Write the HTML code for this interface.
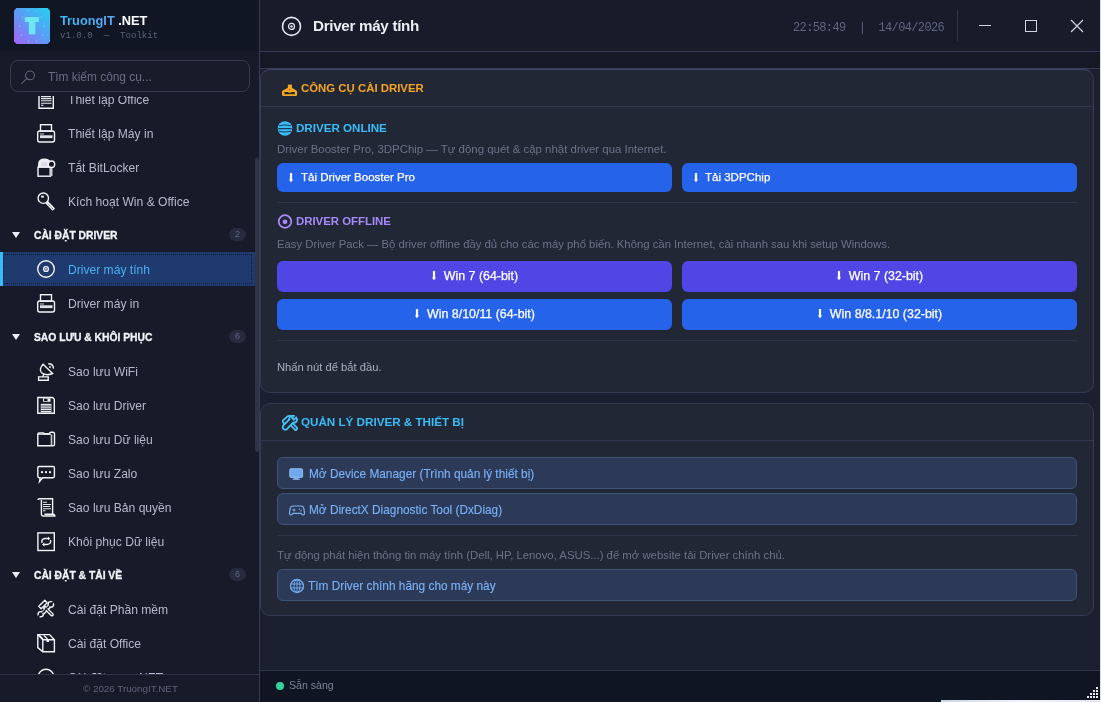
<!DOCTYPE html>
<html><head><meta charset="utf-8">
<style>
*{margin:0;padding:0;box-sizing:border-box}
html,body{width:1101px;height:702px;overflow:hidden;background:#1b2030;font-family:"Liberation Sans",sans-serif}
.abs{position:absolute}
#sb{position:absolute;left:0;top:0;width:259px;height:702px;background:#171b29}
#sbh{position:absolute;left:0;top:0;width:259px;height:51px;background:#111625}
#sbline{position:absolute;left:259px;top:0;width:1px;height:702px;background:#353b51}
#logo{position:absolute;left:14px;top:8px;width:36px;height:36px;border-radius:6px;background:linear-gradient(45deg,#a855f7 0%,#60a5fa 55%,#22d3ee 100%)}
#brand{position:absolute;left:60px;top:13px;font-weight:bold;font-size:12.8px;color:#fff;white-space:pre}
#brand .g{background:linear-gradient(90deg,#38bdf8,#60a5fa);-webkit-background-clip:text;color:transparent}
#ver{position:absolute;left:60px;top:30px;font-family:"Liberation Mono",monospace;font-size:9.1px;color:#5a6178;white-space:pre}
#search{position:absolute;left:10px;top:60px;width:240px;height:32px;border:1px solid #343a50;border-radius:8px;background:#181c2a}
#search span{position:absolute;left:37px;top:9px;font-size:11.9px;color:#666d84}
#list{position:absolute;left:0;top:96px;width:255px;height:578px;overflow:hidden}
.row{position:absolute;left:0;width:255px;height:34px}
.it span{position:absolute;left:68px;top:11px;font-size:12.1px;color:#b4b9cc;white-space:pre}
.it svg{position:absolute;left:34px;top:0}
.act{background:#1e3a6e}
.act span{color:#4ab0f0}
.acc{position:absolute;left:0;top:0;width:3px;height:34px;background:#38bdf8}
.focus{position:absolute;left:3px;top:2px;width:249px;height:30px;border:1px dotted #0d1a33}
.sec span{position:absolute;left:34px;top:12px;font-size:10.3px;font-weight:bold;color:#f2f4f8;white-space:pre;-webkit-text-stroke:0.3px #f2f4f8}
.sec .tri{position:absolute;left:12px;top:14px;width:0;height:0;border-left:4px solid transparent;border-right:4px solid transparent;border-top:6px solid #eceef3}
.sec .badge{position:absolute;left:229px;top:10px;width:17px;height:13px;border-radius:7px;background:#262c3e;color:#5e6580;font-size:9px;text-align:center;line-height:13px;font-weight:normal}
#scroll{position:absolute;left:255px;top:158px;width:4px;height:294px;background:#2d3446;border-radius:2px}
#foot{position:absolute;left:0;top:674px;width:259px;height:28px;border-top:1px solid #2f3548;background:#171b29}
#foot span{position:absolute;left:83px;top:8px;font-size:9.8px;color:#5c6378;white-space:pre}
#mh{position:absolute;left:260px;top:0;width:841px;height:52px;background:#171b2a;border-bottom:1px solid #353b54}
#tb{position:absolute;left:260px;top:52px;width:841px;height:17px;background:#151926;border-bottom:1px solid #383d54}
.card{position:absolute;left:260px;width:834px;background:#222736;border:1px solid #343a52;border-radius:10px}
.ch{position:absolute;left:0;top:0;width:100%;border-bottom:1px solid #31374e}
.t{white-space:pre;line-height:1.15}
.mono{font-family:"Liberation Mono",monospace}
.btn{position:absolute;border-radius:6px}
.btn span{position:absolute;top:8px;font-size:11.53px;color:#fff;white-space:pre;-webkit-text-stroke:0.25px #fff}
.btn.c span{position:static;display:block;text-align:center;line-height:31px;font-size:12.4px}
.bl{background:#2563eb}
.pu{background:#4f46e5}
.ol{background:#2c3a57;border:1px solid #3e5479;border-radius:6px}
.ol span{color:#78aff5;font-size:11.85px;top:9px;-webkit-text-stroke:0.15px #78aff5}
.dl{position:absolute;left:11px;top:10px;width:6px;height:10px;line-height:0}
.dl2{display:inline-block;width:6px;height:10px;margin-right:7px;vertical-align:-1px;line-height:0}
#status{position:absolute;left:260px;top:670px;width:841px;height:32px;background:#101524;border-top:1px solid #2f3548}
#root{position:absolute;left:0;top:0;width:1101px;height:702px;will-change:transform}
</style></head><body><div id="root">
<div id="sb"></div>
<div id="sbh"></div>
<svg class="abs" style="left:14px;top:8px" width="36" height="36" viewBox="0 0 36 36"><defs><linearGradient id="lg" x1="0" y1="1" x2="1" y2="0"><stop offset="0" stop-color="#a463f7"/><stop offset="0.5" stop-color="#5b9cf6"/><stop offset="1" stop-color="#22d3ee"/></linearGradient></defs><path d="M2.5 0H33.5L36 2.5V33.5L33.5 36H2.5L0 33.5V2.5Z" fill="url(#lg)"/><path d="M10.8 9.1H25V14H21.4V26.2H14.8V14H10.8Z" fill="#6ee7f5"/><g fill="#cfe8ff" opacity="0.7"><circle cx="8.5" cy="9" r="0.6"/><circle cx="14.5" cy="2.5" r="0.5"/><circle cx="22" cy="3" r="0.5"/><circle cx="27.5" cy="9" r="0.6"/><circle cx="5.5" cy="18" r="0.6"/><circle cx="30" cy="18" r="0.6"/><circle cx="7.5" cy="27" r="0.6"/><circle cx="28.5" cy="27" r="0.6"/><circle cx="14.5" cy="33" r="0.5"/><circle cx="22.5" cy="33" r="0.5"/></g></svg>
<div id="brand"><span class="g">TruongIT</span> .NET</div>
<div id="ver">v1.0.0  —  Toolkit</div>
<div id="search"><svg style="position:absolute;left:9px;top:3px" width="24" height="24" viewBox="0 0 24 24"><circle cx="10" cy="11.4" r="4.4" fill="none" stroke="#5d6478" stroke-width="1.1"/><path d="M6.8 14.6L1.5 19.6" stroke="#5d6478" stroke-width="1.1"/></svg><span>Tìm kiếm công cụ...</span></div>
<div id="list">
<div class="row it" style="top:-14px"><svg width="24" height="34" viewBox="0 0 24 34"><path d="M5 13.5V26.3H19.3V13.5" stroke="#f4f5f8" fill="none" stroke-width="1.4" stroke-width="1.6"/><path d="M7 14.6H17M7 16.6H17.5M7 18.8H17.5M7 21.3H17.5M7 23.3H9.5" stroke="#e8e9ee" stroke-width="1.1"/></svg><span>Thiết lập Office</span></div>
<div class="row it" style="top:20px"><svg width="24" height="34" viewBox="0 0 24 34"><rect x="6.5" y="8.7" width="11" height="6.5" stroke="#f4f5f8" fill="none" stroke-width="1.4"/><rect x="3.7" y="15" width="16.8" height="11" rx="2" stroke="#f4f5f8" fill="none" stroke-width="1.4"/><rect x="6" y="19.3" width="12.5" height="2.8" fill="#dfe1e8"/><path d="M6 18H10" stroke="#ccc" stroke-width="1"/></svg><span>Thiết lập Máy in</span></div>
<div class="row it" style="top:54px"><svg width="24" height="34" viewBox="0 0 24 34"><path d="M4 17.5V14.5Q4 8.6 10.5 8.6Q15.5 8.6 17 12.5V17.5Z" fill="#eef0f4"/><path d="M7 17.5V14.8Q7 11.6 10.5 11.6Q13 11.6 13.5 13.5V17.5Z" fill="#d9dce4"/><rect x="4" y="17.2" width="12.5" height="9" fill="#141826" stroke="#f4f5f8" fill="none" stroke-width="1.4" stroke-width="1.5"/><rect x="15.5" y="17" width="3" height="9" fill="#c9ccd6"/><circle cx="17.5" cy="14.2" r="3.2" fill="#141826" stroke="#f4f5f8" fill="none" stroke-width="1.4" stroke-width="1.5"/></svg><span>Tắt BitLocker</span></div>
<div class="row it" style="top:88px"><svg width="24" height="34" viewBox="0 0 24 34"><circle cx="9.3" cy="14.2" r="5.2" stroke="#f4f5f8" fill="none" stroke-width="1.4" stroke-width="2.1"/><rect x="7.2" y="11.6" width="2.6" height="2" fill="#f4f5f8"/><path d="M12.5 18L19.8 25.6" stroke="#f4f5f8" stroke-width="3.4"/><path d="M14 19.8L19 25" stroke="#141826" stroke-width="0.9" stroke-dasharray="1 1"/></svg><span>Kích hoạt Win &amp; Office</span></div>
<div class="row sec" style="top:122px"><i class="tri"></i><span>CÀI ĐẶT DRIVER</span><b class="badge">2</b></div>
<div class="row it act" style="top:156px"><i class="acc"></i><i class="focus"></i><svg width="24" height="34" viewBox="0 0 24 34"><circle cx="12" cy="17" r="8.3" stroke="#f4f5f8" fill="none" stroke-width="1.4" stroke-width="1.5"/><circle cx="12" cy="17" r="2.4" stroke="#f4f5f8" fill="none" stroke-width="1.4" stroke-width="1.1"/><circle cx="12" cy="17" r="0.9" fill="#f4f5f8"/></svg><span>Driver máy tính</span></div>
<div class="row it" style="top:190px"><svg width="24" height="34" viewBox="0 0 24 34"><rect x="6.5" y="8.7" width="11" height="6.5" stroke="#f4f5f8" fill="none" stroke-width="1.4"/><rect x="3.7" y="15" width="16.8" height="11" rx="2" stroke="#f4f5f8" fill="none" stroke-width="1.4"/><rect x="6" y="19.3" width="12.5" height="2.8" fill="#dfe1e8"/><path d="M6 18H10" stroke="#ccc" stroke-width="1"/></svg><span>Driver máy in</span></div>
<div class="row sec" style="top:224px"><i class="tri"></i><span>SAO LƯU &amp; KHÔI PHỤC</span><b class="badge">6</b></div>
<div class="row it" style="top:258px"><svg width="24" height="34" viewBox="0 0 24 34"><path d="M9.1 10.3C6 13.5 5.6 17 7.6 18.8C10.5 21 15 21 18.6 19.5Z" fill="#141826" stroke="#f4f5f8" fill="none" stroke-width="1.4" stroke-width="1.7"/><path d="M14.3 9.8Q19.2 9.8 19.5 14.6" stroke="#f4f5f8" fill="none" stroke-width="1.4" stroke-width="2"/><circle cx="16" cy="13" r="0.9" fill="#f4f5f8"/><path d="M9.8 19.8L8.8 23" stroke="#f4f5f8" fill="none" stroke-width="1.4" stroke-width="1.6"/><path d="M4.6 22.9H14.2V26.3H4.6Z" fill="#141826" stroke="#f4f5f8" fill="none" stroke-width="1.4" stroke-width="1.6"/></svg><span>Sao lưu WiFi</span></div>
<div class="row it" style="top:292px"><svg width="24" height="34" viewBox="0 0 24 34"><path d="M3.8 9.5H18.6L20.3 11.3V25.3H3.8Z" stroke="#f4f5f8" fill="none" stroke-width="1.4" stroke-width="1.5"/><rect x="9" y="10.3" width="7.5" height="3.5" fill="#f0f1f5"/><rect x="10" y="10.8" width="3.5" height="2.3" fill="#141826"/><rect x="6.8" y="15.8" width="10.6" height="8.5" fill="#e9eaf0"/><path d="M7.2 18H17M7.2 20.2H17M7.2 22.5H17" stroke="#141826" stroke-width="0.8"/></svg><span>Sao lưu Driver</span></div>
<div class="row it" style="top:326px"><svg width="24" height="34" viewBox="0 0 24 34"><path d="M3.8 12.2Q3.8 11 5.2 11H9.5L10.5 11.8H15Q15.8 10.5 17.2 10.3H19Q20.5 10.3 20.5 11.8V22.5Q20.5 23.8 19 23.8H3.8Z" fill="#141826" stroke="#f4f5f8" fill="none" stroke-width="1.4" stroke-width="1.5"/><path d="M17.5 12.5V23.5" stroke="#c7c9d3" stroke-width="1.6"/><path d="M4 12.3H17" stroke="#f4f5f8" stroke-width="1"/></svg><span>Sao lưu Dữ liệu</span></div>
<div class="row it" style="top:360px"><svg width="24" height="34" viewBox="0 0 24 34"><rect x="3.8" y="10.5" width="16.6" height="11.2" rx="1.4" stroke="#f4f5f8" fill="none" stroke-width="1.4" stroke-width="1.5"/><path d="M6.2 21.5L5.5 25.5L8.8 21.5" fill="#141826" stroke="#f4f5f8" fill="none" stroke-width="1.4" stroke-width="1.3"/><circle cx="8" cy="16.2" r="1.1" fill="#fff"/><circle cx="12" cy="16.2" r="1.1" fill="#fff"/><circle cx="16" cy="16.2" r="1.1" fill="#fff"/></svg><span>Sao lưu Zalo</span></div>
<div class="row it" style="top:394px"><svg width="24" height="34" viewBox="0 0 24 34"><path d="M4 10Q4 8.8 5.5 8.8H18.6V24.2" stroke="#f4f5f8" fill="none" stroke-width="1.4" stroke-width="1.6"/><path d="M7.4 10V24.6Q7.4 26 9 26H20.8Q20.8 24.2 19 24.2H10.5" stroke="#f4f5f8" fill="none" stroke-width="1.4" stroke-width="1.6"/><path d="M9 12.3H13M9 14.5H17M9 16.5H16M9 18.8H17M9 20.8H11.5" stroke="#e6e7ec" stroke-width="1.1"/></svg><span>Sao lưu Bản quyền</span></div>
<div class="row it" style="top:428px"><svg width="24" height="34" viewBox="0 0 24 34"><rect x="3.9" y="8.9" width="16.4" height="17.6" stroke="#f4f5f8" fill="none" stroke-width="1.4" stroke-width="1.6"/><path d="M8 19Q7 15 11 14.5H15" stroke="#f4f5f8" fill="none" stroke-width="1.4" stroke-width="1.2"/><path d="M14 13L15.8 14.5L14 16" fill="#f4f5f8" stroke="#f4f5f8" stroke-width="0.8"/><path d="M16.5 16Q17.5 20 13 20.5H9.3" stroke="#f4f5f8" fill="none" stroke-width="1.4" stroke-width="1.2"/><path d="M10.3 19L8.5 20.5L10.3 22" fill="#f4f5f8" stroke="#f4f5f8" stroke-width="0.8"/></svg><span>Khôi phục Dữ liệu</span></div>
<div class="row sec" style="top:462px"><i class="tri"></i><span>CÀI ĐẶT &amp; TẢI VỀ</span><b class="badge">6</b></div>
<div class="row it" style="top:496px"><svg width="24" height="34" viewBox="0 0 24 34"><g transform="translate(12 16.8) scale(0.86) translate(-12 -16.5)"><g stroke="#f4f5f8" stroke-width="1.6" fill="#141826" stroke-linejoin="round"><path d="M15.3 12.2L8.3 19.2L6.6 20.9L8.8 23.1L10.5 21.4L17.5 14.4Z"/><circle cx="17.6" cy="11.4" r="3.2"/><circle cx="5.8" cy="22.8" r="3"/><path d="M11.2 13.6L20 22.4Q20.8 23.6 19.8 24.4Q18.9 25 18 24.2L9.3 15.5Z"/><path d="M13.4 9.4L10.6 6.6L3.6 13.6L6.4 16.4Z"/></g><path d="M18.6 10.4L20.8 8.2M4.8 23.8L2.6 26" stroke="#141826" stroke-width="2"/><path d="M16 12.8L7.8 21" stroke="#141826" stroke-width="1.6"/></g></svg><span>Cài đặt Phần mềm</span></div>
<div class="row it" style="top:530px"><svg width="24" height="34" viewBox="0 0 24 34"><path d="M3.8 8.6H15.6L20.4 13.8V25.8H8.8L3.8 21.6Z" stroke="#f4f5f8" fill="none" stroke-width="1.4" stroke-width="1.7"/><path d="M3.8 8.6L8.8 13.8H20.4M8.8 13.8V25.8" stroke="#f4f5f8" fill="none" stroke-width="1.4" stroke-width="1.7"/><path d="M5.5 9.5L9 13M10 9.5L13.5 13" stroke="#f4f5f8" stroke-width="1.3"/><rect x="12.5" y="13.5" width="2.5" height="2.5" fill="#f4f5f8"/></svg><span>Cài đặt Office</span></div>
<div class="row it" style="top:564px"><svg width="24" height="34" viewBox="0 0 24 34"><circle cx="12" cy="17" r="7.8" stroke="#f4f5f8" fill="none" stroke-width="1.4" stroke-width="1.5"/></svg><span>Cài đặt <span style="position:static;display:inline-block;width:26px"></span>.NET</span></div>
</div>
<div id="scroll"></div>
<div id="foot"><span>© 2026 TruongIT.NET</span></div>
<div id="sbline"></div>

<div id="mh"></div>
<div id="tb"></div>
<svg class="abs" style="left:280px;top:15px" width="24" height="24" viewBox="0 0 24 24"><circle cx="11.5" cy="11.4" r="9" fill="none" stroke="#e6e8ef" stroke-width="1.6"/><circle cx="11.5" cy="11.4" r="3" fill="none" stroke="#e6e8ef" stroke-width="1.2"/><circle cx="11.5" cy="11.4" r="1.2" fill="#e6e8ef"/></svg>
<div class="abs t" style="left:313px;top:17px;font-size:15.2px;letter-spacing:-0.3px;font-weight:bold;color:#eceef4">Driver máy tính</div>
<div class="abs t mono" style="left:793px;top:22px;font-size:12px;letter-spacing:-0.63px;color:#5d6580">22:58:49  |  14/04/2026</div>
<div class="abs" style="left:957px;top:10px;width:1px;height:31px;background:#2f3548"></div>
<div class="abs" style="left:979px;top:25px;width:12px;height:1px;background:#d2d5de"></div>
<div class="abs" style="left:1025px;top:20px;width:12px;height:12px;border:1.2px solid #d2d5de"></div>
<svg class="abs" style="left:1070px;top:19px" width="14" height="14" viewBox="0 0 14 14"><path d="M1 1L13 13M13 1L1 13" stroke="#d2d5de" stroke-width="1.2"/></svg>

<div class="card" style="top:69px;height:324px;border-top-color:#3d4269"><div class="ch" style="height:37px"></div></div>
<svg class="abs" style="left:278px;top:80px" width="24" height="20" viewBox="0 0 24 20"><rect x="9.8" y="4.6" width="4.2" height="4" fill="#f5a623"/><path d="M9.5 8H14.3L18 10.2Q19.1 10.8 19.1 12V14.5Q19.1 16 17.6 16H5.5Q4 16 4 14.5V12Q4 10.8 5.1 10.2Z" fill="#f5a623"/><rect x="6.4" y="12" width="10.4" height="2.2" fill="#23232a"/><rect x="10.3" y="11.4" width="3.1" height="1.3" fill="#f5a623"/><path d="M10.9 9.3H12.3L11.6 10.4Z" fill="#5a3a10"/></svg>
<div class="abs t" style="left:301px;top:82px;font-size:11.4px;font-weight:bold;color:#f5a524">CÔNG CỤ CÀI DRIVER</div>

<svg class="abs" style="left:277px;top:121px" width="16" height="16" viewBox="0 0 16 16"><circle cx="8" cy="7.5" r="7.3" fill="#38bdf8"/><path d="M2.2 4.8Q8 3.2 13.8 4.8M1.2 7.6H14.8M2.2 10.3Q8 11.8 13.8 10.3" fill="none" stroke="#1c3a55" stroke-width="1.1"/></svg>
<div class="abs t" style="left:296px;top:120.5px;font-size:11.6px;font-weight:bold;color:#38bdf8">DRIVER ONLINE</div>
<div class="abs t" style="left:277px;top:143px;font-size:11.45px;color:#6b7287">Driver Booster Pro, 3DPChip — Tự động quét &amp; cập nhật driver qua Internet.</div>
<div class="btn bl" style="left:277px;top:163px;width:395px;height:29px"><i class="dl"><svg width="6" height="10" viewBox="0 0 6 10"><path d="M1.9 0H4.1V6.4H5.1L3 9.3L0.9 6.4H1.9Z" fill="#fff"/></svg></i><span style="left:24px">Tải Driver Booster Pro</span></div>
<div class="btn bl" style="left:682px;top:163px;width:395px;height:29px"><i class="dl"><svg width="6" height="10" viewBox="0 0 6 10"><path d="M1.9 0H4.1V6.4H5.1L3 9.3L0.9 6.4H1.9Z" fill="#fff"/></svg></i><span style="left:23px">Tải 3DPChip</span></div>
<div class="abs" style="left:277px;top:202px;width:800px;height:1px;background:#30364a"></div>
<svg class="abs" style="left:277px;top:214px" width="16" height="16" viewBox="0 0 16 16"><circle cx="8" cy="7.5" r="6.3" fill="none" stroke="#a78bfa" stroke-width="1.8"/><circle cx="8" cy="7.8" r="2.4" fill="#a78bfa"/></svg>
<div class="abs t" style="left:296px;top:214.5px;font-size:11.4px;font-weight:bold;color:#a78bfa">DRIVER OFFLINE</div>
<div class="abs t" style="left:277px;top:238px;font-size:11.33px;color:#6b7287">Easy Driver Pack — Bộ driver offline đầy đủ cho các máy phổ biến. Không cần Internet, cài nhanh sau khi setup Windows.</div>
<div class="btn pu c" style="left:277px;top:261px;width:395px;height:31px"><span><i class="dl2"><svg width="6" height="10" viewBox="0 0 6 10"><path d="M1.9 0H4.1V6.4H5.1L3 9.3L0.9 6.4H1.9Z" fill="#fff"/></svg></i>Win 7 (64-bit)</span></div>
<div class="btn pu c" style="left:682px;top:261px;width:395px;height:31px"><span><i class="dl2"><svg width="6" height="10" viewBox="0 0 6 10"><path d="M1.9 0H4.1V6.4H5.1L3 9.3L0.9 6.4H1.9Z" fill="#fff"/></svg></i>Win 7 (32-bit)</span></div>
<div class="btn bl c" style="left:277px;top:299px;width:395px;height:31px"><span><i class="dl2"><svg width="6" height="10" viewBox="0 0 6 10"><path d="M1.9 0H4.1V6.4H5.1L3 9.3L0.9 6.4H1.9Z" fill="#fff"/></svg></i>Win 8/10/11 (64-bit)</span></div>
<div class="btn bl c" style="left:682px;top:299px;width:395px;height:31px"><span><i class="dl2"><svg width="6" height="10" viewBox="0 0 6 10"><path d="M1.9 0H4.1V6.4H5.1L3 9.3L0.9 6.4H1.9Z" fill="#fff"/></svg></i>Win 8/8.1/10 (32-bit)</span></div>
<div class="abs" style="left:277px;top:340px;width:800px;height:1px;background:#30364a"></div>
<div class="abs t" style="left:277px;top:361px;font-size:11.2px;color:#a9afc0">Nhấn nút để bắt đầu.</div>

<div class="card" style="top:403px;height:213px"><div class="ch" style="height:37px"></div></div>
<svg class="abs" style="left:281.5px;top:414.5px" width="16" height="16" viewBox="3.5 6.2 18 18"><path d="M4.2 12.8L9.5 7.8Q12 6.5 14 8.3L11.3 11.2L20.3 20.5Q20.8 22.5 18.8 23.5L9.8 14.3L7.6 16.5Q4.8 15.8 4.2 12.8Z" fill="#1b2a3c" stroke="#4cc3f7" stroke-width="2"/><path d="M19.5 9Q21.5 11.5 19.5 13.8Q17.8 15.3 15.8 14.8L9.3 21.8Q7.3 23.8 5 21.8Q3.2 19.7 5.3 17.6L11.8 11.2Q11.5 8.8 13.2 7.6Q15 6.6 16.8 7.3L14.8 9.5L16.8 11.6L19 9.5Z" fill="#1b2a3c" stroke="#4cc3f7" stroke-width="2"/></svg>
<div class="abs t" style="left:301px;top:415px;font-size:11.65px;font-weight:bold;color:#38bdf8">QUẢN LÝ DRIVER &amp; THIẾT BỊ</div>
<div class="btn ol" style="left:277px;top:457px;width:800px;height:32px"><svg style="position:absolute;left:11px;top:8px" width="16" height="16" viewBox="0 0 16 16"><rect x="0.8" y="2.8" width="12.8" height="8.6" rx="1" fill="#6ea8ee" stroke="#8fbcf3" stroke-width="1"/><rect x="5.2" y="11.5" width="4" height="1.3" fill="#8fbcf3"/><rect x="3.6" y="12.6" width="7.2" height="1.2" fill="#8fbcf3"/></svg><span style="left:31px">Mở Device Manager (Trình quản lý thiết bị)</span></div>
<div class="btn ol" style="left:277px;top:493px;width:800px;height:32px"><svg style="position:absolute;left:11px;top:8px" width="16" height="16" viewBox="0 0 16 16"><path d="M4 4H12Q14.5 4 15 7.5L15.5 11Q15.5 13 14 13Q13 13 12 11.3H4Q3 13 2 13Q0.5 13 0.5 11L1 7.5Q1.5 4 4 4Z" fill="none" stroke="#7fb2f0" stroke-width="1.2"/><path d="M3.5 8H6.5M5 6.5V9.5" stroke="#7fb2f0" stroke-width="1"/><circle cx="10.5" cy="7.2" r="0.7" fill="#7fb2f0"/><circle cx="12" cy="8.7" r="0.7" fill="#7fb2f0"/></svg><span style="left:31px">Mở DirectX Diagnostic Tool (DxDiag)</span></div>
<div class="abs" style="left:277px;top:535px;width:800px;height:1px;background:#30364a"></div>
<div class="abs t" style="left:277px;top:549px;font-size:11.35px;color:#6b7287">Tự động phát hiện thông tin máy tính (Dell, HP, Lenovo, ASUS...) để mở website tải Driver chính chủ.</div>
<div class="btn ol" style="left:277px;top:569px;width:800px;height:32px"><svg style="position:absolute;left:11px;top:8px" width="16" height="16" viewBox="0 0 16 16"><circle cx="8" cy="8" r="6.5" fill="none" stroke="#6ea8ee" stroke-width="1.4"/><ellipse cx="8" cy="8" rx="3" ry="6.5" fill="none" stroke="#6ea8ee" stroke-width="1"/><path d="M1.5 6H14.5M1.5 10H14.5M8 1.5V14.5" stroke="#6ea8ee" stroke-width="1"/></svg><span style="left:30px">Tìm Driver chính hãng cho máy này</span></div>

<div id="status"></div>
<div class="abs" style="left:276px;top:682px;width:8px;height:8px;border-radius:4px;background:#34d399"></div>
<div class="abs t" style="left:289px;top:679px;font-size:10.6px;color:#7c8296">Sẵn sàng</div>
<svg class="abs" style="left:1087px;top:687px" width="12" height="12" viewBox="0 0 12 12"><g fill="#e8eaf0"><rect x="9" y="0" width="2" height="2"/><rect x="6" y="3" width="2" height="2"/><rect x="9" y="3" width="2" height="2"/><rect x="3" y="6" width="2" height="2"/><rect x="6" y="6" width="2" height="2"/><rect x="9" y="6" width="2" height="2"/><rect x="0" y="9" width="2" height="2"/><rect x="3" y="9" width="2" height="2"/><rect x="6" y="9" width="2" height="2"/><rect x="9" y="9" width="2" height="2"/></g></svg>
<div class="abs" style="left:1100px;top:0;width:1px;height:702px;background:#d8dde6"></div>
<div class="abs" style="left:941px;top:700px;width:160px;height:2px;background:linear-gradient(90deg,#c9d6e6,#eef2f7 50%,#e5e9ef)"></div>
</div></body></html>
